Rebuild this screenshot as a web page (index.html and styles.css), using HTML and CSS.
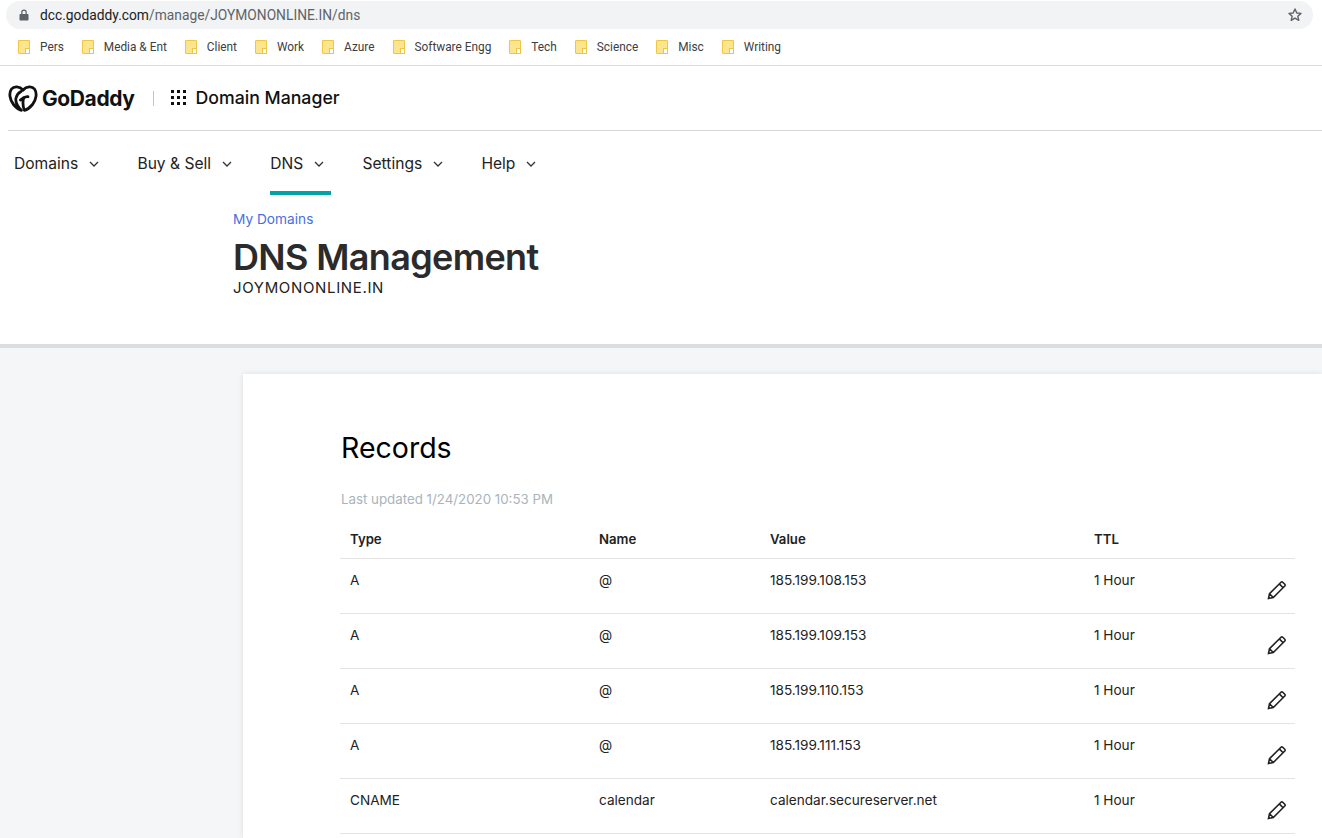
FILE: index.html
```html
<!DOCTYPE html>
<html lang="en">
<head>
    <meta charset="UTF-8">
    <title>DNS Management</title>
    <link rel="stylesheet" href="styles.css">
</head>
<body>
    <div class="chrome">
        <div class="address-bar">
            <svg class="lock" width="10" height="12" viewBox="0 0 10 12"><path fill="#5f6368" d="M2.2 5V3.400a2.800 2.800 0 0 1 5.600 0V5h.7c.6 0 1 .4 1 1v4.600c0 .6-.4 1-1 1h-7c-.6 0-1-.4-1-1V6c0-.6.4-1 1-1zm1.200 0h3.200V3.400a1.600 1.600 0 0 0-3.200 0z"/></svg>
            <span class="url"><b>dcc.godaddy.com</b>/manage/JOYMONONLINE.IN/dns</span>
            <svg class="star" width="16" height="16" viewBox="0 0 16 16"><path fill="none" stroke="#5f6368" stroke-width="1.4" stroke-linejoin="round" d="M8 2l1.800 4 4.200.4-3.200 2.800 1 4.200L8 11.200l-3.800 2.200 1-4.200L2 6.400 6.200 6z"/></svg>
        </div>
        <div class="bookmarks">
            <span class="bookmark"><i class="folder"></i>Pers</span>
            <span class="bookmark"><i class="folder"></i>Media &amp; Ent</span>
            <span class="bookmark"><i class="folder"></i>Client</span>
            <span class="bookmark"><i class="folder"></i>Work</span>
            <span class="bookmark"><i class="folder"></i>Azure</span>
            <span class="bookmark"><i class="folder"></i>Software Engg</span>
            <span class="bookmark"><i class="folder"></i>Tech</span>
            <span class="bookmark"><i class="folder"></i>Science</span>
            <span class="bookmark"><i class="folder"></i>Misc</span>
            <span class="bookmark"><i class="folder"></i>Writing</span>
        </div>
    </div>

    <header class="brand-bar">
        <svg class="logo" width="30" height="27" viewBox="0 0 30 27" fill="none" stroke="#111" stroke-width="2.800" stroke-linecap="round" stroke-linejoin="round">
            <path d="M15 5C11.500 1 6 .8 3.500 4 .6 8 1.800 15 5.500 19.500 8 22.500 11 24.800 13.500 25.300 10.500 23 7 17.500 8 13 8.600 10.500 10.500 7.800 13 6.500"/>
            <path d="M15 5c3.500-4 9-4.200 11.500-1 2.900 4 1.700 11-2 15.500-2.500 3-6 5.300-8 5.800-1.500-3-1.800-8-1-12.300l-3 2"/>
            <path d="M15.500 13c1.500-1 3-1.500 4.500-1.300"/>
        </svg>
        <span class="wordmark">GoDaddy</span>
        <span class="brand-sep"></span>
        <svg class="apps" width="16" height="16" viewBox="0 0 16 16" fill="#111">
            <rect x="0" y="0" width="3" height="3"/><rect x="6" y="0" width="3" height="3"/><rect x="12" y="0" width="3" height="3"/>
            <rect x="0" y="6" width="3" height="3"/><rect x="6" y="6" width="3" height="3"/><rect x="12" y="6" width="3" height="3"/>
            <rect x="0" y="12" width="3" height="3"/><rect x="6" y="12" width="3" height="3"/><rect x="12" y="12" width="3" height="3"/>
        </svg>
        <span class="product">Domain Manager</span>
    </header>

    <nav class="main-nav">
        <a class="nav-item">Domains<svg class="chev" width="10" height="6" viewBox="0 0 10 6"><path d="M1 1l4 4 4-4"/></svg></a>
        <a class="nav-item">Buy &amp; Sell<svg class="chev" width="10" height="6" viewBox="0 0 10 6"><path d="M1 1l4 4 4-4"/></svg></a>
        <a class="nav-item active">DNS<svg class="chev" width="10" height="6" viewBox="0 0 10 6"><path d="M1 1l4 4 4-4"/></svg></a>
        <a class="nav-item">Settings<svg class="chev" width="10" height="6" viewBox="0 0 10 6"><path d="M1 1l4 4 4-4"/></svg></a>
        <a class="nav-item">Help<svg class="chev" width="10" height="6" viewBox="0 0 10 6"><path d="M1 1l4 4 4-4"/></svg></a>
    </nav>

    <section class="page-head">
        <a class="crumb">My Domains</a>
        <h1>DNS Management</h1>
        <div class="domain">JOYMONONLINE.IN</div>
    </section>

    <main class="content">
        <div class="card">
            <h2>Records</h2>
            <p class="updated">Last updated 1/24/2020 10:53 PM</p>
            <table class="records">
                <thead>
                    <tr><th class="col-type">Type</th><th class="col-name">Name</th><th class="col-value">Value</th><th class="col-ttl">TTL</th><th class="col-edit"></th></tr>
                </thead>
                <tbody>
                    <tr><td>A</td><td>@</td><td>185.199.108.153</td><td>1 Hour</td><td class="edit"><svg width="20" height="20" viewBox="0 0 20 20"><path d="M1.500 18.500l1-4.800L14 2.200a1.200 1.200 0 0 1 1.700 0l2.100 2.100a1.200 1.200 0 0 1 0 1.700L6.300 17.500zM12.300 3.900l3.800 3.800M2.500 13.700l3.800 3.800"/></svg></td></tr>
                    <tr><td>A</td><td>@</td><td>185.199.109.153</td><td>1 Hour</td><td class="edit"><svg width="20" height="20" viewBox="0 0 20 20"><path d="M1.500 18.500l1-4.800L14 2.200a1.200 1.200 0 0 1 1.700 0l2.100 2.100a1.200 1.200 0 0 1 0 1.700L6.300 17.500zM12.300 3.900l3.800 3.800M2.500 13.700l3.800 3.800"/></svg></td></tr>
                    <tr><td>A</td><td>@</td><td>185.199.110.153</td><td>1 Hour</td><td class="edit"><svg width="20" height="20" viewBox="0 0 20 20"><path d="M1.500 18.500l1-4.800L14 2.200a1.200 1.200 0 0 1 1.700 0l2.100 2.100a1.200 1.200 0 0 1 0 1.700L6.300 17.500zM12.300 3.900l3.800 3.800M2.500 13.700l3.800 3.800"/></svg></td></tr>
                    <tr><td>A</td><td>@</td><td>185.199.111.153</td><td>1 Hour</td><td class="edit"><svg width="20" height="20" viewBox="0 0 20 20"><path d="M1.500 18.500l1-4.800L14 2.200a1.200 1.200 0 0 1 1.700 0l2.100 2.100a1.200 1.200 0 0 1 0 1.700L6.300 17.500zM12.300 3.900l3.800 3.800M2.500 13.700l3.800 3.800"/></svg></td></tr>
                    <tr><td>CNAME</td><td>calendar</td><td>calendar.secureserver.net</td><td>1 Hour</td><td class="edit"><svg width="20" height="20" viewBox="0 0 20 20"><path d="M1.500 18.500l1-4.800L14 2.200a1.200 1.200 0 0 1 1.700 0l2.100 2.100a1.200 1.200 0 0 1 0 1.700L6.300 17.500zM12.300 3.900l3.800 3.800M2.500 13.700l3.800 3.800"/></svg></td></tr>
                </tbody>
            </table>
        </div>
    </main>
</body>
</html>
```

FILE: styles.css
```css
html {
    height: 100%;
    overflow: hidden;
}
body {
    margin: 0;
    height: 100%;
    display: flex;
    flex-direction: column;
    background: #fff;
    color: #111;
    font-family: 'Inter', 'Liberation Sans', sans-serif;
}

/* browser chrome */
.chrome {
    height: 64px;
    padding-top: 1px;
    border-bottom: 1px solid #dadce0;
    font-family: 'Roboto', 'Liberation Sans', sans-serif;
}
.address-bar {
    display: flex;
    align-items: center;
    height: 28px;
    margin: 0 9px 0 6px;
    padding: 0 10px 0 13px;
    border-radius: 14px;
    background: #f1f3f4;
}
.url {
    margin-left: 11px;
    font-size: 13.800px;
    color: #5f6368;
}
.url b {
    font-weight: 400;
    color: #202124;
}
.star {
    margin-left: auto;
}
.bookmarks {
    display: flex;
    align-items: center;
    height: 36px;
    padding-left: 18px;
    gap: 18px;
    font-size: 11.850px;
    color: #3c4043;
}
.bookmark {
    display: flex;
    align-items: center;
}
.folder {
    position: relative;
    display: block;
    box-sizing: border-box;
    width: 12px;
    height: 14px;
    margin-right: 10px;
    background: #fde58f;
    border: 1px solid #eec643;
    border-radius: 1px;
}
.folder::after {
    content: "";
    position: absolute;
    right: -1px;
    bottom: -1px;
    width: 3px;
    height: 4px;
    background: #fff;
    border: 1px solid #eec643;
}

/* godaddy header */
.brand-bar {
    display: flex;
    align-items: center;
    height: 64px;
    margin-left: 8px;
    border-bottom: 1px solid #d6d6d6;
}
.wordmark {
    margin-left: 4px;
    font-size: 21px;
    font-weight: 700;
    letter-spacing: -0.400px;
}
.brand-sep {
    width: 1px;
    height: 15px;
    margin: 0 17px 0 18px;
    background: #c4c4c4;
}
.product {
    margin: 0 0 1px 9px;
    font-size: 17.700px;
    font-weight: 500;
}
.main-nav {
    display: flex;
    height: 64px;
    padding-left: 14px;
    gap: 31.700px;
}
.nav-item {
    display: flex;
    align-items: center;
    height: 64px;
    box-sizing: border-box;
    padding-top: 4px;
    font-size: 15.600px;
    color: #222;
    border-bottom: 4px solid transparent;
}
.nav-item.active {
    border-bottom-color: #00a4a6;
}
.chev {
    margin: 2px 6.500px 0 11px;
    fill: none;
    stroke: #333;
    stroke-width: 1.300;
}

.page-head {
    height: 153px;
    padding: 15px 0 0 233px;
    box-sizing: border-box;
    border-bottom: 4px solid #dcdddf;
}
.crumb {
    display: block;
    font-size: 13.700px;
    line-height: 18px;
    color: #4a6ee0;
}
h1 {
    margin: 7px 0 0;
    font-size: 36px;
    line-height: 44px;
    font-weight: 600;
    color: #2b2b2b;
    letter-spacing: -0.650px;
}
.domain {
    font-size: 15px;
    line-height: 18px;
    letter-spacing: 0.650px;
    color: #222;
}

.content {
    flex: 1;
    min-height: 0;
    padding: 26px 0 0 243px;
    background: #f5f6f8;
}
.card {
    height: 100%;
    padding: 56px 27px 0 97px;
    box-sizing: border-box;
    background: #fff;
    box-shadow: 0 0 6px rgba(0,0,0,0.1);
}
h2 {
    margin: 0 0 0 1px;
    font-size: 28.500px;
    line-height: 36px;
    font-weight: 400;
    color: #000;
}
.updated {
    margin: 24px 0 0 1px;
    font-size: 13.300px;
    line-height: 18px;
    color: #aab4bc;
}
.records {
    width: 955px;
    margin-top: 6px;
    border-collapse: collapse;
    table-layout: fixed;
    font-size: 13.600px;
    color: #222;
}
.records th {
    height: 44px;
    box-sizing: border-box;
    padding: 6px 0 0 10px;
    text-align: left;
    font-size: 13.200px;
    font-weight: 600;
    border-bottom: 1px solid #e4e4e4;
}
.records td {
    height: 55px;
    padding: 13px 0 0 10px;
    box-sizing: border-box;
    vertical-align: top;
    border-bottom: 1px solid #e4e4e4;
}
.col-type { width: 249px; }
.col-name { width: 171px; }
.col-value { width: 324px; }
.col-ttl { width: 150px; }
.records td.edit {
    padding: 21px 0 0 0;
}
.edit svg {
    display: block;
    margin-left: 33px;
    fill: none;
    stroke: #222;
    stroke-width: 1.600;
}
```
